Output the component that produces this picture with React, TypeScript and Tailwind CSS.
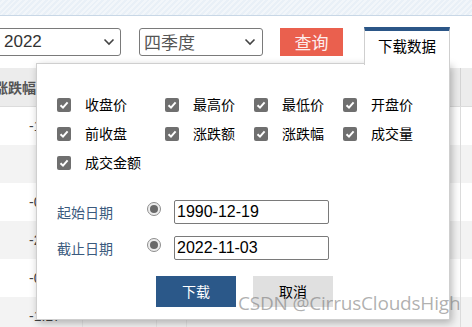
import React from "react";

const cjk = "font-['Noto_Sans_CJK_SC','Noto_Sans',sans-serif]";
const latin = "font-['Liberation_Sans','Noto_Sans_CJK_SC',sans-serif]";

function Chevron() {
  return (
    <svg width="12" height="8" viewBox="0 0 12 8" className="shrink-0">
      <path d="M1.5 1.5 L6 6 L10.5 1.5" fill="none" stroke="#444" strokeWidth="1.6" />
    </svg>
  );
}

function Check({ label }: { label: string }) {
  return (
    <div className="flex items-center h-[29px]">
      <span className="w-[14px] h-[14px] rounded-[2px] bg-[#6f6f6f] flex items-center justify-center shrink-0">
        <svg width="12" height="12" viewBox="0 0 12 12">
          <path d="M2.5 6.2 L5 8.6 L9.6 3.4" fill="none" stroke="#fff" strokeWidth="2" />
        </svg>
      </span>
      <span className={`ml-[14px] text-[14px] text-black ${cjk}`}>{label}</span>
    </div>
  );
}

function DateRow({ label, value }: { label: string; value: string }) {
  return (
    <div className="flex items-center h-[24px]">
      <span className={`w-[90px] text-[14px] text-[#3b5a7d] ${cjk}`}>{label}</span>
      <span className="w-[14px] h-[14px] rounded-full border border-[#8e8e8e] bg-[#ededed] flex items-center justify-center -mt-[7px] shrink-0">
        <span className="w-[8px] h-[8px] rounded-full bg-[#6a6a6a]" />
      </span>
      <div className={`ml-[13px] w-[155px] h-[24px] border border-[#7a7a7a] rounded-[2px] px-[2px] flex items-center text-[16px] text-black ${latin}`}>
        {value}
      </div>
    </div>
  );
}

const rows = ["-1.23", "", "-0.41", "-2.06", "-0.85", "-1.17"];

export default function App() {
  return (
    <div className="relative w-[472px] h-[327px] overflow-hidden bg-white">
      {/* top strip */}
      <div className="h-[16px] border-b border-[#c8d7e6] bg-[repeating-linear-gradient(135deg,#e9f0f7_0px,#e9f0f7_2px,#f2f6fa_2px,#f2f6fa_4px)]" />

      {/* toolbar */}
      <div className="mt-[12px] flex items-center h-[28px]">
        <div className={`-ml-[4px] w-[125px] h-[28px] border border-[#7a7a7a] rounded-[3px] flex items-center justify-between pl-[7px] pr-[5px] text-[17px] text-[#333] ${latin}`}>
          <span>2022</span>
          <Chevron />
        </div>
        <div className={`ml-[18px] w-[124px] h-[28px] border border-[#7a7a7a] rounded-[3px] flex items-center justify-between pl-[4px] pr-[6px] text-[17px] text-[#555] ${cjk}`}>
          <span>四季度</span>
          <Chevron />
        </div>
        <div className={`ml-[17px] w-[63px] h-[28px] bg-[#ea604e] text-[#fdeeee] text-[17px] flex items-center justify-center ${cjk}`}>
          查询
        </div>
      </div>

      {/* table behind */}
      <div className={`mt-[12px] ${cjk}`}>
        <div className="flex h-[39px] bg-[#ececec] border-b border-[#dcdcdc] text-[14px] font-bold text-[#555]">
          <div className="w-[83px] flex items-center -indent-[6px] border-r border-[#dcdcdc]">涨跌幅</div>
          <div className="w-[74px] border-r border-[#dcdcdc]" />
          <div className="w-[30px] border-r border-[#dcdcdc]" />
          <div className="w-[274px] border-r border-[#d4d4d4]" />
          <div className="flex-1" />
        </div>
        {rows.map((r, i) => (
          <div key={i} className={`flex h-[38px] text-[14px] text-[#444] ${i % 2 === 0 ? "bg-white" : "bg-[#f3f3f3]"}`}>
            <div className={`w-[83px] flex items-center pl-[29px] border-r border-[#e6e6e6] ${latin}`}>{r}</div>
            <div className="w-[74px] border-r border-[#e6e6e6]" />
            <div className="w-[30px] border-r border-[#e6e6e6]" />
            <div className="w-[274px] border-r border-[#dcdcdc]" />
            <div className="flex-1" />
          </div>
        ))}
      </div>

      {/* download popup */}
      <div className="absolute left-[36px] top-[63px] w-[414px] h-[257px] bg-white border border-[#cfcfcf] shadow-[2px_3px_8px_rgba(0,0,0,0.28)] pl-[20px] pt-[26px]">
        <div className="grid grid-cols-[108px_89px_89px_1fr]">
          <Check label="收盘价" />
          <Check label="最高价" />
          <Check label="最低价" />
          <Check label="开盘价" />
          <Check label="前收盘" />
          <Check label="涨跌额" />
          <Check label="涨跌幅" />
          <Check label="成交量" />
          <Check label="成交金额" />
        </div>
        <div className="mt-[23px] flex flex-col gap-[12px]">
          <DateRow label="起始日期" value="1990-12-19" />
          <DateRow label="截止日期" value="2022-11-03" />
        </div>
        <div className={`mt-[16px] ml-[99px] flex gap-[17px] text-[14px] ${cjk}`}>
          <div className="w-[80px] h-[31px] bg-[#2b5889] text-white flex items-center justify-center">下载</div>
          <div className="w-[80px] h-[31px] bg-[#e0e0e0] text-black flex items-center justify-center">取消</div>
        </div>
      </div>

      {/* tab */}
      <div className={`absolute left-[364px] top-[27px] w-[86px] h-[38px] bg-white border-t-4 border-t-[#2b5687] border-x border-x-[#cfcfcf] flex justify-center pt-[4px] text-[14.5px] text-black ${cjk}`}>
        下载数据
      </div>

      {/* watermark */}
      <div className="absolute left-[238px] top-[294px] text-[19px] text-[rgba(110,110,110,0.55)] font-['Open_Sans',sans-serif] leading-none tracking-[-0.2px] whitespace-nowrap">
        CSDN @CirrusCloudsHigh
      </div>
    </div>
  );
}
